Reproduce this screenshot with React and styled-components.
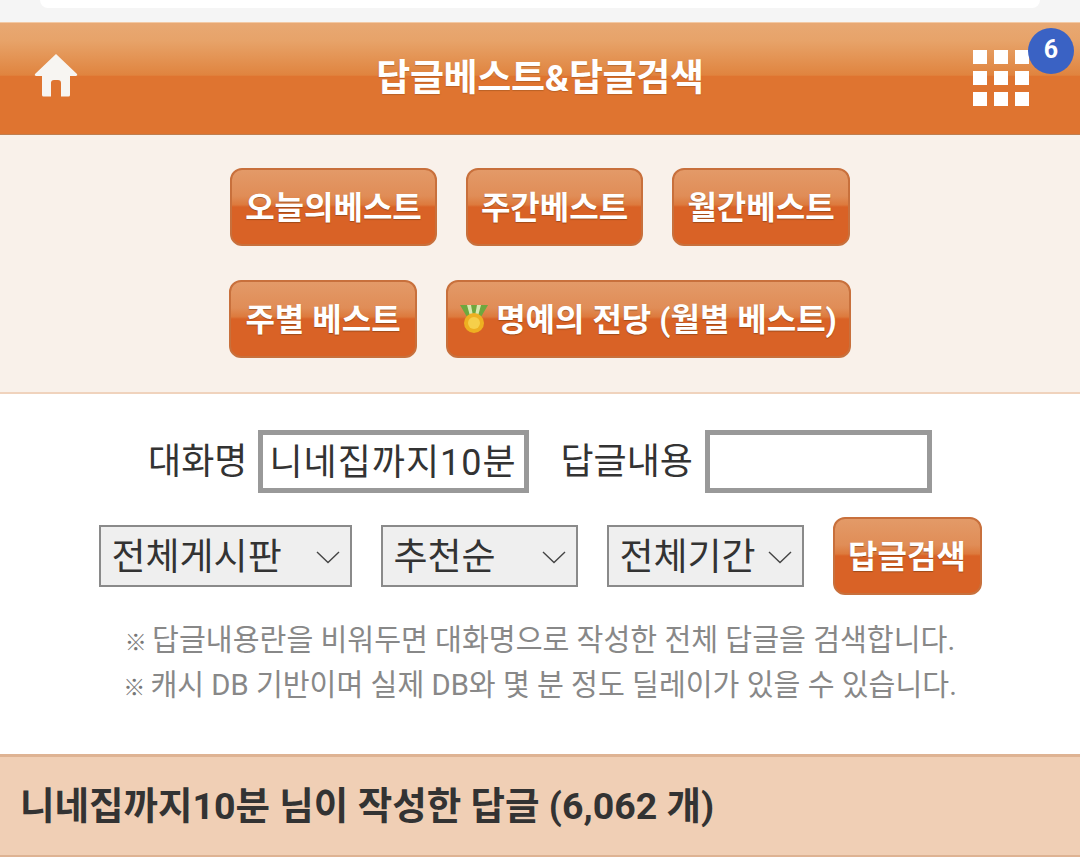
import React from 'react'
import styled, { createGlobalStyle } from 'styled-components'

const GlobalStyle = createGlobalStyle`
  html, body { margin: 0; padding: 0; background: #fff; }
  body { font-family: Roboto, "Noto Sans CJK KR", sans-serif; }
  * { box-sizing: border-box; }
`

const TopStrip = styled.div`
  height: 22px;
  background: #f5f5f5;
  padding: 0 40px;
`
const SearchPill = styled.div`
  height: 8px;
  background: #fff;
  border-radius: 0 0 24px 24px;
`
const Header = styled.header`
  position: relative;
  height: 113px;
  padding: 0 26px 0 34px;
  display: flex;
  align-items: center;
  justify-content: space-between;
  background: linear-gradient(#e8a873 0, #e7a369 16%, #e0843f 47%, #df7430 48%, #df7430 100%);
  border-top: 1px solid #f3c9a4;
  border-bottom: 1px solid #c07f50;
`
const Title = styled.h1`
  position: absolute;
  left: 0;
  right: 0;
  top: 31px;
  margin: 0;
  text-align: center;
  font-size: 37px;
  line-height: 50px;
  font-weight: 700;
  color: #fff;
  letter-spacing: -0.3px;
  text-shadow: 0 1px 1px rgba(150, 80, 30, 0.5);
`
const HomeIcon = styled.svg`
  display: block;
  width: 44px;
  height: 44px;
  margin-top: -8px;
`
const MenuBox = styled.div`
  position: relative;
  width: 56px;
  height: 56px;
  margin: -1px 25px 0 0;
  display: grid;
  grid-template-columns: repeat(3, 14px);
  grid-template-rows: repeat(3, 14px);
  gap: 7px;
`
const MenuDot = styled.span`
  background: #fff;
`
const Badge = styled.span`
  position: absolute;
  left: 55px;
  top: -22px;
  width: 46px;
  height: 46px;
  border-radius: 50%;
  background: #3a62c4;
  color: #fff;
  font-size: 25px;
  font-weight: 700;
  display: flex;
  align-items: center;
  justify-content: center;
  padding-bottom: 4px;
`
const BestPanel = styled.section`
  background: #f9f1ea;
  padding: 33px 0 34px;
  border-bottom: 2px solid #f0d3bd;
  display: flex;
  flex-direction: column;
  gap: 34px;
`
const ButtonRow = styled.div`
  display: flex;
  justify-content: center;
  gap: 29px;
`
const OrangeButton = styled.a`
  display: flex;
  align-items: center;
  justify-content: center;
  gap: 8px;
  width: ${p => p.$w}px;
  height: 78px;
  padding-bottom: 4px;
  border-radius: 12px;
  border: 2px solid #c8703c;
  background: linear-gradient(#e39a68 0, #e08d57 35%, #dd7a3d 47%, #d96226 50%, #d96226 100%);
  color: #fff;
  font-size: 32px;
  font-weight: 700;
  white-space: nowrap;
  text-shadow: 0 1px 1px rgba(120, 60, 20, 0.6);
`
const MedalIcon = styled.svg`
  width: 28px;
  height: 30px;
  flex: none;
  margin-top: 4px;
`
const SearchPanel = styled.section`
  height: 360px;
  padding-top: 36px;
  display: flex;
  flex-direction: column;
  align-items: center;
`
const FieldRow = styled.div`
  display: flex;
  align-items: center;
  height: 63px;
`
const FieldLabel = styled.label`
  font-size: 36px;
  color: #333;
  margin: 0 ${p => p.$after}px 0 ${p => p.$gap || 0}px;
  padding-bottom: 8px;
`
const TextInput = styled.input`
  width: ${p => p.$w}px;
  height: 63px;
  border: 5px solid #999;
  border-radius: 0;
  outline: none;
  background: #fff;
  padding: 0 6px 5px;
  font-family: inherit;
  font-size: 36px;
  letter-spacing: 1px;
  color: #333;
`
const SelectRow = styled.div`
  display: flex;
  align-items: center;
  gap: 29px;
  margin-top: 24px;
`
const SelectBox = styled.div`
  position: relative;
  width: ${p => p.$w}px;
  height: 62px;
`
const Select = styled.select`
  appearance: none;
  width: 100%;
  height: 100%;
  border: 2px solid #8a8a8a;
  border-radius: 0;
  background: #efefef;
  padding: 3px 0 0 11px;
  font-family: inherit;
  font-size: 37px;
  color: #333;
`
const Chevron = styled.svg`
  position: absolute;
  right: 12px;
  top: 26px;
  width: 24px;
  height: 13px;
  pointer-events: none;
`
const Notes = styled.div`
  margin-top: 24px;
  text-align: center;
  font-size: 29.2px;
  line-height: 43px;
  color: #888;
  white-space: nowrap;
`
const NoteLine = styled.p`
  margin: 0;
`
const NoteMark = styled.span`
  font-size: 22px;
  margin-right: -2px;
  color: #777;
  font-weight: 700;
`
const ResultBar = styled.div`
  height: 103px;
  padding: 0 20px 8px;
  display: flex;
  align-items: center;
  background: #f0cfb5;
  border-top: 3px solid #deb393;
  border-bottom: 2px solid #deb393;
  font-size: 37.5px;
  font-weight: 700;
  color: #333;
  white-space: nowrap;
`

const Arrow = () => (
  <Chevron viewBox="0 0 24 13">
    <path d="M1 1 L12 11.5 L23 1" fill="none" stroke="#444" strokeWidth="1.4" />
  </Chevron>
)

export default function App() {
  return (
    <>
      <GlobalStyle />
      <TopStrip><SearchPill /></TopStrip>
      <Header>
        <HomeIcon viewBox="0 0 44 44">
          <path
            d="M22 1 L43 21 Q44 22.5 42 23 L36 23 L36 42 Q36 43.5 34.5 43.5 L27 43.5 L27 30 Q27 27 24 27 L20 27 Q17 27 17 30 L17 43.5 L9.5 43.5 Q8 43.5 8 42 L8 23 L2 23 Q0 22.5 1 21 Z"
            fill="#f7f5f2"
          />
        </HomeIcon>
        <Title>답글베스트&amp;답글검색</Title>
        <MenuBox>
          {Array.from({ length: 9 }).map((_, i) => <MenuDot key={i} />)}
          <Badge>6</Badge>
        </MenuBox>
      </Header>
      <BestPanel>
        <ButtonRow>
          <OrangeButton $w={207}>오늘의베스트</OrangeButton>
          <OrangeButton $w={177}>주간베스트</OrangeButton>
          <OrangeButton $w={178}>월간베스트</OrangeButton>
        </ButtonRow>
        <ButtonRow>
          <OrangeButton $w={188}>주별 베스트</OrangeButton>
          <OrangeButton $w={405}>
            <MedalIcon viewBox="0 0 28 30">
              <path d="M0 1 H28 L21 13 H7 Z" fill="#6ea83e" />
              <path d="M7 1 H11 L13 12 H10 Z M17 1 H21 L18 12 H15 Z" fill="#d8e8b0" />
              <circle cx="14" cy="19" r="10" fill="#eeb021" />
              <circle cx="14" cy="19" r="6" fill="#f6cf4a" />
            </MedalIcon>
            명예의 전당 (월별 베스트)
          </OrangeButton>
        </ButtonRow>
      </BestPanel>
      <SearchPanel>
        <FieldRow>
          <FieldLabel $after={11}>대화명</FieldLabel>
          <TextInput $w={271} defaultValue="니네집까지10분" />
          <FieldLabel $gap={31} $after={12}>답글내용</FieldLabel>
          <TextInput $w={227} />
        </FieldRow>
        <SelectRow>
          <SelectBox $w={253}>
            <Select><option>전체게시판</option></Select>
            <Arrow />
          </SelectBox>
          <SelectBox $w={197}>
            <Select><option>추천순</option></Select>
            <Arrow />
          </SelectBox>
          <SelectBox $w={197}>
            <Select><option>전체기간</option></Select>
            <Arrow />
          </SelectBox>
          <OrangeButton $w={149}>답글검색</OrangeButton>
        </SelectRow>
        <Notes>
          <NoteLine><NoteMark>※</NoteMark> 답글내용란을 비워두면 대화명으로 작성한 전체 답글을 검색합니다.</NoteLine>
          <NoteLine><NoteMark>※</NoteMark> 캐시 DB 기반이며 실제 DB와 몇 분 정도 딜레이가 있을 수 있습니다.</NoteLine>
        </Notes>
      </SearchPanel>
      <ResultBar>니네집까지10분 님이 작성한 답글 (6,062 개)</ResultBar>
    </>
  )
}
